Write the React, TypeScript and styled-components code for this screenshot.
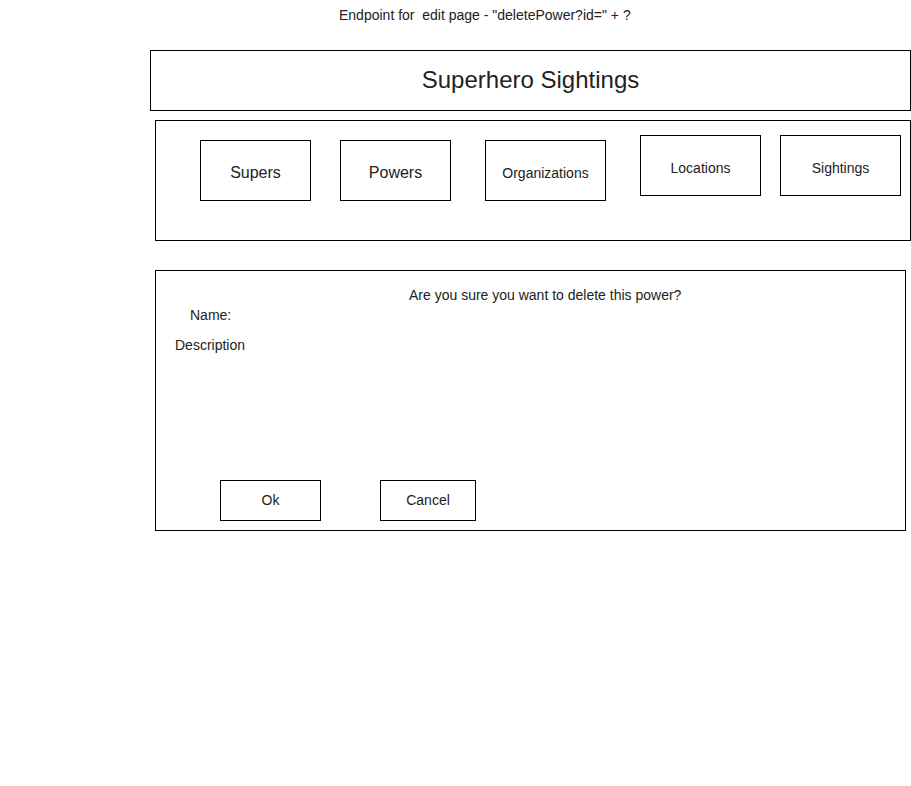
import React from "react";
import styled, { createGlobalStyle } from "styled-components";

const Global = createGlobalStyle`
  html, body {
    margin: 0;
    padding: 0;
    background: #ffffff;
  }
  body {
    font-family: "Liberation Sans", Arial, Helvetica, sans-serif;
    color: #222222;
  }
  * { box-sizing: border-box; }
`;

const Page = styled.div`
  width: 911px;
  min-height: 786px;
  display: flex;
  flex-direction: column;
  align-items: flex-start;
`;

const Caption = styled.div`
  margin: 5px 0 0 339px;
  font-size: 14px;
  line-height: 20px;
  white-space: pre;
`;

const TitleBox = styled.header`
  margin: 25px 0 0 150px;
  width: 761px;
  height: 61px;
  border: 1px solid #000;
  display: flex;
  align-items: center;
  justify-content: center;
  font-size: 24px;
  line-height: 28px;
  padding-bottom: 2px;
`;

const NavBox = styled.nav`
  margin: 9px 0 0 155px;
  width: 756px;
  height: 121px;
  border: 1px solid #000;
  display: flex;
  align-items: flex-start;
  padding-left: 44px;
`;

const NavButton = styled.div<{ $left: number; $top: number; $w: number; $size: number }>`
  margin-left: ${(p) => p.$left}px;
  margin-top: ${(p) => p.$top}px;
  width: ${(p) => p.$w}px;
  height: 61px;
  border: 1px solid #000;
  display: flex;
  align-items: center;
  justify-content: center;
  font-size: ${(p) => p.$size}px;
  line-height: 20px;
  padding-top: 5px;
`;

const DeleteBox = styled.section`
  margin: 29px 0 0 155px;
  width: 751px;
  height: 261px;
  border: 1px solid #000;
  display: flex;
  flex-direction: column;
  align-items: flex-start;
  padding-top: 14px;
`;

const Line = styled.div<{ $left: number; $top?: number }>`
  margin-left: ${(p) => p.$left}px;
  margin-top: ${(p) => p.$top ?? 0}px;
  font-size: 14px;
  line-height: 20px;
  white-space: pre;
`;

const Actions = styled.div`
  margin-top: 125px;
  display: flex;
  align-items: flex-start;
`;

const ActionButton = styled.button<{ $left: number; $w: number }>`
  margin-left: ${(p) => p.$left}px;
  width: ${(p) => p.$w}px;
  height: 41px;
  border: 1px solid #000;
  background: #fff;
  color: #222222;
  font-family: "Liberation Sans", Arial, Helvetica, sans-serif;
  font-size: 14px;
  line-height: 20px;
  padding: 0 0 2px;
  display: flex;
  align-items: center;
  justify-content: center;
  cursor: pointer;
`;

const navItems = [
  { label: "Supers", left: 0, top: 19, w: 111, size: 16 },
  { label: "Powers", left: 29, top: 19, w: 111, size: 16 },
  { label: "Organizations", left: 34, top: 19, w: 121, size: 14 },
  { label: "Locations", left: 34, top: 14, w: 121, size: 14 },
  { label: "Sightings", left: 19, top: 14, w: 121, size: 14 },
];

export default function App() {
  return (
    <>
      <Global />
      <Page>
        <Caption>{'Endpoint for  edit page - "deletePower?id=" + ?'}</Caption>
        <TitleBox>Superhero Sightings</TitleBox>
        <NavBox>
          {navItems.map((n) => (
            <NavButton key={n.label} $left={n.left} $top={n.top} $w={n.w} $size={n.size}>
              {n.label}
            </NavButton>
          ))}
        </NavBox>
        <DeleteBox>
          <Line $left={253}>Are you sure you want to delete this power?</Line>
          <Line $left={34}>Name:</Line>
          <Line $left={19} $top={10}>Description</Line>
          <Actions>
            <ActionButton $left={64} $w={101}>Ok</ActionButton>
            <ActionButton $left={59} $w={96}>Cancel</ActionButton>
          </Actions>
        </DeleteBox>
      </Page>
    </>
  );
}
